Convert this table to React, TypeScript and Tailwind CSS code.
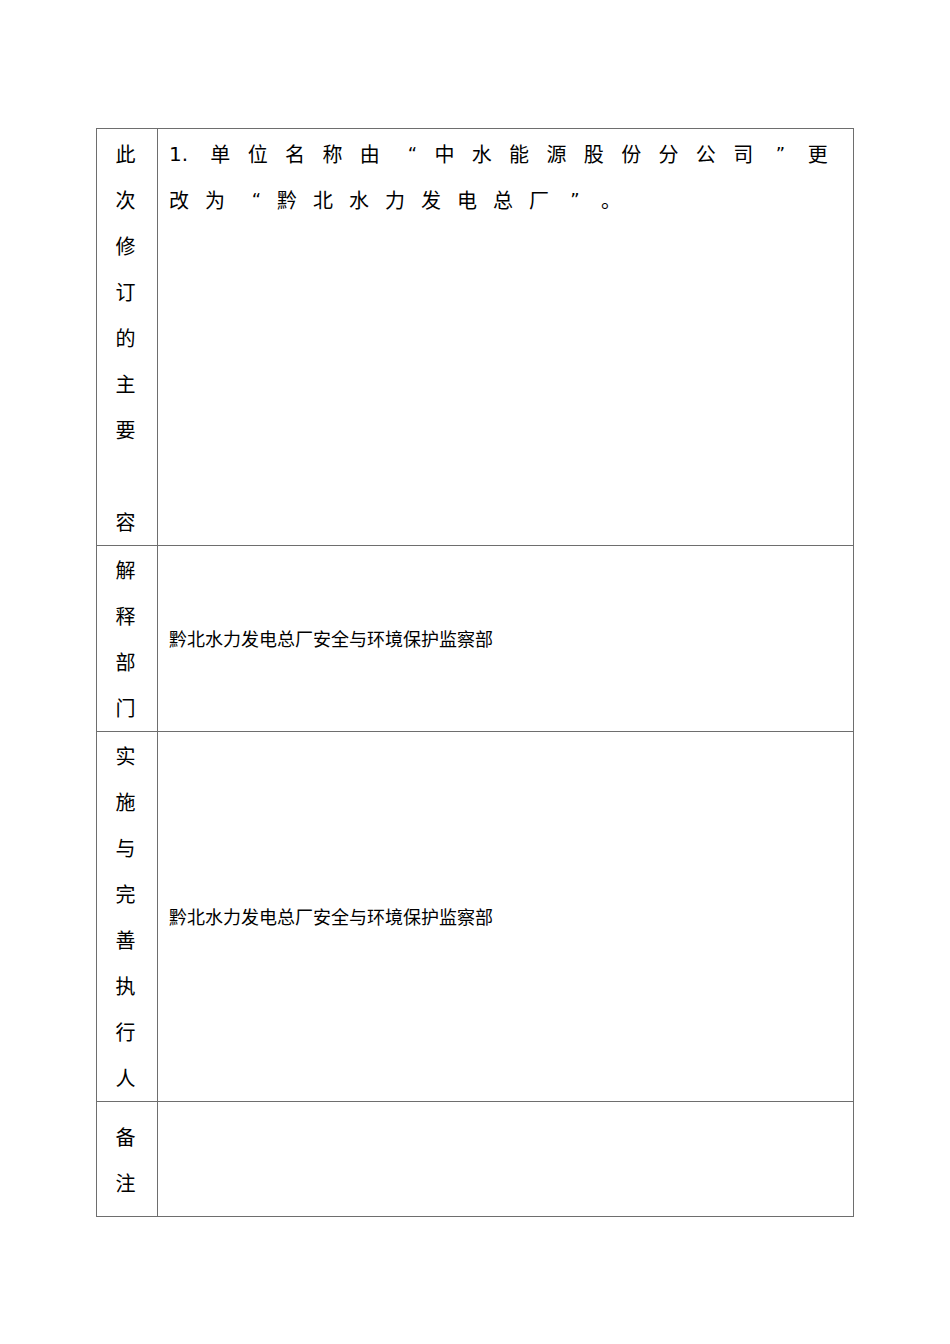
import React from "react";

const font = { fontFamily: '"DejaVu Sans", "Noto Sans CJK SC", sans-serif' };
const cjk = { fontFamily: '"Noto Sans CJK SC", "DejaVu Sans", sans-serif' };
const dv = { fontFamily: '"DejaVu Sans", sans-serif' };

function LeftCell({ chars, className = "" }: { chars: string[]; className?: string }) {
  return (
    <div
      className={`w-[61px] shrink-0 border-r border-[#6e6e6e] flex flex-col items-center pr-[3px] text-[20px] leading-[46px] text-black ${className}`}
      style={cjk}
    >
      {chars.map((c, i) => (
        <div key={i} className="h-[46px]">
          {c}
        </div>
      ))}
    </div>
  );
}

function Ch({ c }: { c: string }) {
  if (c === "“") {
    return (
      <span className="w-[20px] text-right text-[18px]" style={dv}>
        {c}
      </span>
    );
  }
  if (c === "”") {
    return (
      <span className="w-[20px] text-center text-[18px]" style={dv}>
        {c}
      </span>
    );
  }
  return (
    <span className="w-[20px] text-center" style={cjk}>
      {c}
    </span>
  );
}

export default function App() {
  const line1 = ["单", "位", "名", "称", "由", "“", "中", "水", "能", "源", "股", "份", "分", "公", "司", "”", "更"];
  const line2 = ["改", "为", "“", "黔", "北", "水", "力", "发", "电", "总", "厂", "”", "。"];
  const dept = "黔北水力发电总厂安全与环境保护监察部";
  return (
    <div className="w-[950px] min-h-[1344px] bg-white pt-[128px]" style={font}>
      <div className="ml-[96px] w-[758px] border border-[#6e6e6e] flex flex-col">
        {/* row 1 */}
        <div className="flex">
          <LeftCell chars={["此", "次", "修", "订", "的", "主", "要", "", "容"]} className="pt-[2px]" />
          <div className="flex-1 pl-[11px] pr-[25px] pt-[2px] text-[20px] leading-[46px] text-black">
            <div className="flex justify-between h-[46px]">
              <span className="w-[24px]" style={dv}>
                1.
              </span>
              {line1.map((c, i) => (
                <Ch key={i} c={c} />
              ))}
            </div>
            <div className="flex gap-[16px] h-[46px]">
              {line2.map((c, i) => (
                <Ch key={i} c={c} />
              ))}
            </div>
          </div>
        </div>
        {/* row 2 */}
        <div className="flex border-t border-[#6e6e6e]">
          <LeftCell chars={["解", "释", "部", "门"]} className="pt-[1px]" />
          <div className="flex-1 pl-[11px] flex items-center text-[18px] text-black" style={cjk}>
            {dept}
          </div>
        </div>
        {/* row 3 */}
        <div className="flex border-t border-[#6e6e6e]">
          <LeftCell chars={["实", "施", "与", "完", "善", "执", "行", "人"]} className="pt-[1px]" />
          <div className="flex-1 pl-[11px] flex items-center text-[18px] text-black" style={cjk}>
            {dept}
          </div>
        </div>
        {/* row 4 */}
        <div className="flex border-t border-[#6e6e6e]">
          <LeftCell chars={["备", "注"]} className="pt-[12px] pb-[10px]" />
          <div className="flex-1" />
        </div>
      </div>
    </div>
  );
}
